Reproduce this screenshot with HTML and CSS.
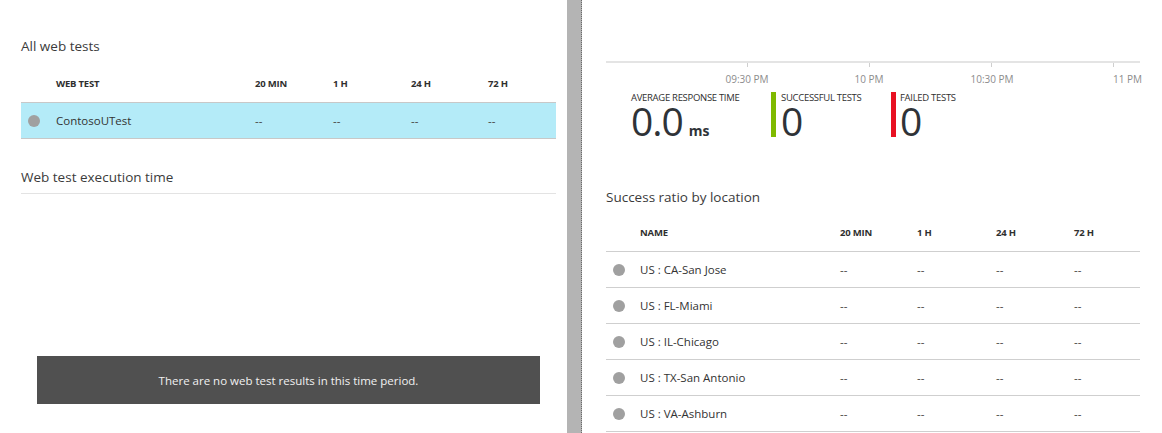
FILE: index.html
```html
<!DOCTYPE html>
<html>
<head>
<meta charset="utf-8">
<link rel="stylesheet" href="styles.css">
</head>
<body>
<div class="page">
  <section class="left">
    <h2 class="title">All web tests</h2>
    <div class="table ltable">
      <div class="hrow lcols">
        <span></span><span>WEB TEST</span><span>20 MIN</span><span>1 H</span><span>24 H</span><span>72 H</span>
      </div>
      <div class="row lcols selected">
        <span class="dot"></span><span class="name">ContosoUTest</span><span class="val">--</span><span class="val">--</span><span class="val">--</span><span class="val">--</span>
      </div>
    </div>
    <h2 class="title ruled">Web test execution time</h2>
    <div class="chartarea">
      <div class="nodata">There are no web test results in this time period.</div>
    </div>
  </section>
  <div class="splitter"></div>
  <section class="right">
    <div class="axis">
      <span class="tick t1"></span><span class="tick t2"></span><span class="tick t3"></span><span class="tick t4"></span>
      <span class="alabel l1">09:30 PM</span>
      <span class="alabel l2">10 PM</span>
      <span class="alabel l3">10:30 PM</span>
      <span class="alabel l4">11 PM</span>
    </div>
    <div class="metrics">
      <div class="metric m1">
        <div class="mlabel">AVERAGE RESPONSE TIME</div>
        <div class="mvalue">0.0<span class="unit">ms</span></div>
      </div>
      <div class="metric m2 bar-green">
        <div class="mlabel">SUCCESSFUL TESTS</div>
        <div class="mvalue">0</div>
      </div>
      <div class="metric m3 bar-red">
        <div class="mlabel">FAILED TESTS</div>
        <div class="mvalue">0</div>
      </div>
    </div>
    <h2 class="title loc-title">Success ratio by location</h2>
    <div class="table rtable">
      <div class="hrow rcols ruled-row">
        <span></span><span>NAME</span><span>20 MIN</span><span>1 H</span><span>24 H</span><span>72 H</span>
      </div>
      <div class="row rcols ruled-row"><span class="dot"></span><span class="name">US : CA-San Jose</span><span class="val">--</span><span class="val">--</span><span class="val">--</span><span class="val">--</span></div>
      <div class="row rcols ruled-row"><span class="dot"></span><span class="name">US : FL-Miami</span><span class="val">--</span><span class="val">--</span><span class="val">--</span><span class="val">--</span></div>
      <div class="row rcols ruled-row"><span class="dot"></span><span class="name">US : IL-Chicago</span><span class="val">--</span><span class="val">--</span><span class="val">--</span><span class="val">--</span></div>
      <div class="row rcols ruled-row"><span class="dot"></span><span class="name">US : TX-San Antonio</span><span class="val">--</span><span class="val">--</span><span class="val">--</span><span class="val">--</span></div>
      <div class="row rcols ruled-row"><span class="dot"></span><span class="name">US : VA-Ashburn</span><span class="val">--</span><span class="val">--</span><span class="val">--</span><span class="val">--</span></div>
    </div>
  </section>
</div>
</body>
</html>
```
FILE: styles.css
```css
* { box-sizing: border-box; }
html, body { margin: 0; padding: 0; background: #fff; }
body {
  font-family: "Open Sans", "Noto Sans", sans-serif;
  color: #333;
  width: 1162px;
  height: 433px;
  overflow: hidden;
}
.page { display: flex; height: 433px; }

.left { width: 567px; padding: 36px 11px 0 21px; }
.right { width: 580px; padding: 0 0 0 24px; }
.right > * { width: 534px; }

.title {
  margin: 0;
  font-size: 13.5px;
  line-height: 20px;
  font-weight: 400;
  color: #3b3b3b;
}
.title.ruled {
  margin-top: 28px;
  padding-bottom: 6px;
  border-bottom: 1px solid #e3e3e3;
}

.table { display: flex; flex-direction: column; }
.ltable { margin-top: 8px; }
.lcols { display: grid; grid-template-columns: 35px 199px 78px 78px 77px 1fr; align-items: center; }
.rcols { display: grid; grid-template-columns: 34px 200px 77px 79px 78px 1fr; align-items: center; }

.hrow { height: 38px; font-size: 9.5px; font-weight: 700; color: #2f2f2f; letter-spacing: -0.2px; }
.row { height: 37px; font-size: 11.5px; color: #333; }
.row.selected { background: #b4ebf8; border-top: 1px solid #c8c8c8; border-bottom: 1px solid #c8c8c8; }
.ruled-row { border-bottom: 1px solid #cfcfcf; }
.rtable .hrow { height: 38px; margin-top: 7px; }
.rtable .row { height: 36px; }
.dot { width: 12px; height: 12px; border-radius: 50%; background: #a0a0a0; margin-left: 7px; }
.val { color: #444; }

.chartarea { padding: 162px 16px 0 16px; }
.nodata {
  height: 48px;
  background: #505050;
  color: #f0f0f0;
  font-size: 11.5px;
  display: flex;
  align-items: center;
  justify-content: center;
}

.splitter {
  width: 15px;
  height: 433px;
  background: #b4b4b4;
  border-right: 1px dotted #6a6a6a;
}

.axis {
  position: relative;
  margin-top: 61px;
  height: 24px;
  border-top: 2px solid #e4e4e4;
}
.tick { position: absolute; top: 0; width: 1px; height: 4px; background: #cfcfcf; }
.t1 { left: 141px; } .t2 { left: 263px; } .t3 { left: 385px; } .t4 { left: 507px; }
.alabel {
  position: absolute;
  top: 9px;
  font-size: 10px;
  line-height: 14px;
  color: #8c8c8c;
  white-space: nowrap;
  transform: translateX(-50%);
}
.l1 { left: 141px; } .l2 { left: 263px; } .l3 { left: 386px; }
.l4 { left: 507px; transform: none; }

.metrics { display: flex; margin-top: 7px; padding-left: 25px; }
.metric { height: 45px; }
.m1 { width: 140px; }
.m2 { width: 120px; }
.bar-green { border-left: 5px solid #7fba00; padding-left: 5px; }
.bar-red { border-left: 5px solid #e81123; padding-left: 4px; }
.mlabel { font-size: 9.5px; line-height: 12px; color: #2f2f2f; letter-spacing: -0.3px; white-space: nowrap; }
.mvalue { font-size: 39px; line-height: 33px; color: #2f3338; white-space: nowrap; letter-spacing: -1px; }
.unit { font-size: 14px; font-weight: 700; margin-left: 6px; letter-spacing: 0; }

.loc-title { margin-top: 50px; }
```
